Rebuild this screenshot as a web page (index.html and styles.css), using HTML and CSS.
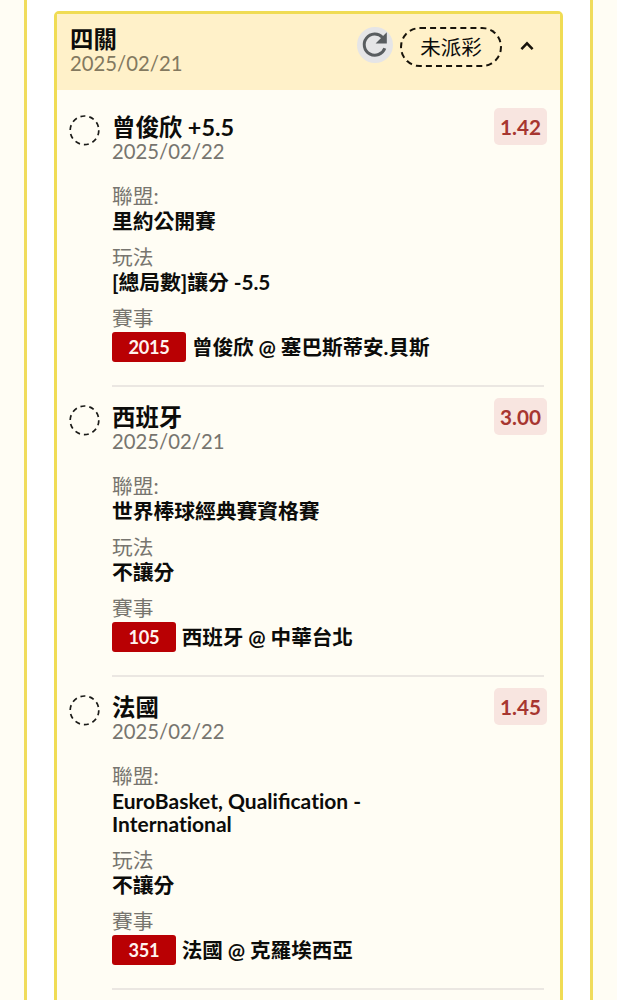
FILE: index.html
```html
<!DOCTYPE html>
<html lang="zh-Hant">
<head>
<meta charset="utf-8">
<title>四關</title>
<link rel="stylesheet" href="styles.css">
</head>
<body>
<main class="panel">
  <section class="card">
    <header class="card-head">
      <div class="card-title">
        <h1 class="title">四關</h1>
        <div class="date">2025/02/21</div>
      </div>
      <div class="actions">
        <span class="refresh">
          <svg width="36" height="36" viewBox="0 0 36 36"><path d="M25.6 10.4A10.6 10.6 0 1 0 27.8 21.2" fill="none" stroke="#595d60" stroke-width="3"/><path d="M29.8 5.2V16.4H18.6z" fill="#595d60"/></svg>
        </span>
        <span class="status">未派彩</span>
        <svg class="chevron" width="14" height="10" viewBox="0 0 14 10"><path d="M1.4 8.2L7 2.4l5.6 5.8" fill="none" stroke="#17130a" stroke-width="2.5"/></svg>
      </div>
    </header>
    <div class="legs">
      <article class="leg">
        <svg class="pending" width="32" height="32" viewBox="0 0 32 32"><circle cx="15.5" cy="16.3" r="14.3"/></svg>
        <div class="leg-body">
          <div class="leg-head">
            <div class="leg-name"><h2 class="title">曾俊欣 +5.5</h2><div class="date">2025/02/22</div></div>
            <span class="odds">1.42</span>
          </div>
          <dl class="details">
            <dt>聯盟:</dt><dd>里約公開賽</dd>
            <dt>玩法</dt><dd>[總局數]讓分 -5.5</dd>
            <dt>賽事</dt><dd class="match"><span class="code">2015</span>曾俊欣 @ 塞巴斯蒂安.貝斯</dd>
          </dl>
        </div>
      </article>
      <article class="leg">
        <svg class="pending" width="32" height="32" viewBox="0 0 32 32"><circle cx="15.5" cy="16.3" r="14.3"/></svg>
        <div class="leg-body">
          <div class="leg-head">
            <div class="leg-name"><h2 class="title">西班牙</h2><div class="date">2025/02/21</div></div>
            <span class="odds">3.00</span>
          </div>
          <dl class="details">
            <dt>聯盟:</dt><dd>世界棒球經典賽資格賽</dd>
            <dt>玩法</dt><dd>不讓分</dd>
            <dt>賽事</dt><dd class="match"><span class="code">105</span>西班牙 @ 中華台北</dd>
          </dl>
        </div>
      </article>
      <article class="leg">
        <svg class="pending" width="32" height="32" viewBox="0 0 32 32"><circle cx="15.5" cy="16.3" r="14.3"/></svg>
        <div class="leg-body">
          <div class="leg-head">
            <div class="leg-name"><h2 class="title">法國</h2><div class="date">2025/02/22</div></div>
            <span class="odds">1.45</span>
          </div>
          <dl class="details">
            <dt>聯盟:</dt><dd class="latin">EuroBasket, Qualificat&zwnj;ion - Internat&zwnj;ional</dd>
            <dt>玩法</dt><dd>不讓分</dd>
            <dt>賽事</dt><dd class="match"><span class="code">351</span>法國 @ 克羅埃西亞</dd>
          </dl>
        </div>
      </article>
    </div>
  </section>
</main>
</body>
</html>
```
FILE: styles.css
```css
* { box-sizing: border-box; }
body {
  margin: 0;
  height: 1000px;
  overflow: hidden;
  background: #fffdf4;
  color: #0c0c0a;
  font-family: Lato, "Noto Sans CJK TC", sans-serif;
  font-size: 20.7px;
}
h1, h2, dl, dd { margin: 0; }
.panel {
  height: 1000px;
  margin: 0 24px;
  padding: 11px 27px 0;
  border: solid #f0dc5c;
  border-width: 0 3px;
  background: #fff;
}
.card {
  height: 1020px;
  border: 3px solid #f0dc54;
  border-radius: 5px;
  background: #fffdf4;
}
.card-head {
  display: flex;
  justify-content: space-between;
  height: 76px;
  padding: 12px 26px 0 13px;
  background: #fff1c9;
}
.title { font-size: 23.4px; line-height: 26px; font-weight: 700; white-space: nowrap; }
.date { margin-top: -1px; font-size: 20.3px; line-height: 25px; color: #77756f; }
.card-head .date { color: #83795f; }
.actions { display: flex; align-items: center; height: 40px; margin-top: 1px; }
.refresh { display: flex; width: 36px; height: 36px; margin: -4px 7px 0 0; border-radius: 50%; background: #e5e5e7; }
.status {
  width: 102px;
  height: 40px;
  border: 2px dashed #17130a;
  border-radius: 20px;
  font-size: 20.5px;
  line-height: 37px;
  text-align: center;
}
.chevron { margin: -2px 0 0 18px; }
.legs { padding-top: 18px; }
.leg { display: flex; margin-bottom: 11px; padding: 0 13px 0 12px; }
.pending { flex: none; margin: 6px 11px 0 0; }
.pending circle { fill: none; stroke: #1b1b18; stroke-width: 1.7; stroke-dasharray: 5 3.98; }
.leg-body { flex: 1; height: 279px; margin-right: 3px; border-bottom: 2px solid #ebe7e2; }
.leg:last-child .leg-body { height: 302px; }
.leg-head { display: flex; justify-content: space-between; margin-right: -3px; }
.leg-name { padding-top: 6px; }
.odds {
  width: 53px;
  height: 37px;
  border-radius: 5px;
  background: #f8e5e0;
  color: #a73630;
  font-weight: 700;
  line-height: 39px;
  text-align: center;
}
.details { padding-top: 20px; }
dt { line-height: 24px; color: #77756f; }
dd { margin-bottom: 11px; font-size: 20.8px; line-height: 26px; font-weight: 700; letter-spacing: -0.05px; }
.latin { width: 262px; padding: 2px 0; font-size: 21px; line-height: 22.5px; letter-spacing: normal; }
.match { display: flex; align-items: center; gap: 6px; margin-top: 2px; line-height: 30px; font-size: 20.6px; }
.code {
  height: 30px;
  padding: 0 16.5px;
  border-radius: 3px;
  background: #b90003;
  color: #fff2ee;
  font-size: 18.2px;
  letter-spacing: -0.3px;
}
```
